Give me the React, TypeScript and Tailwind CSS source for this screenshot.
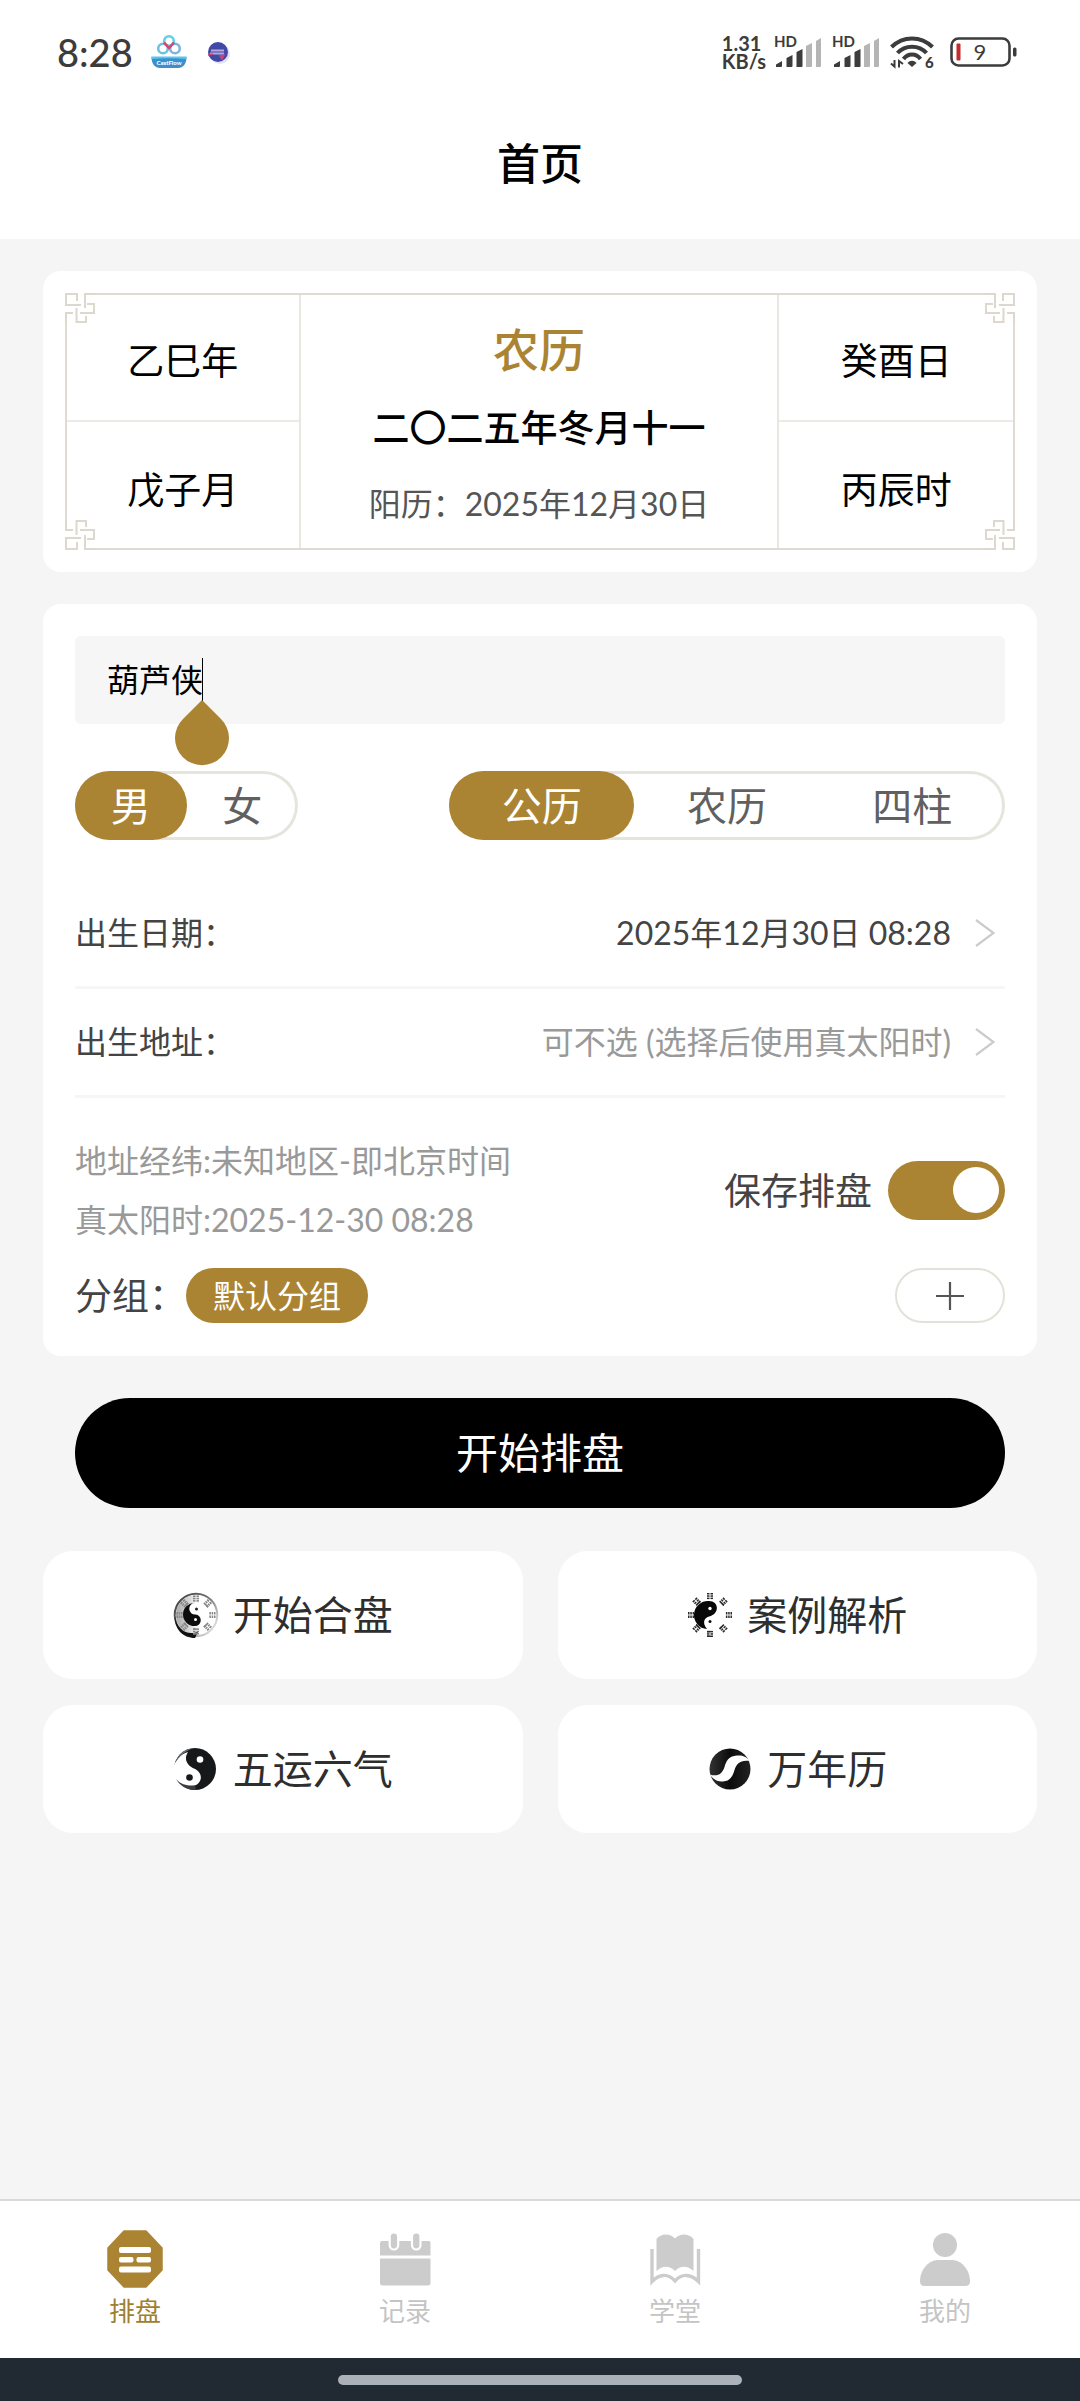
import React, { useState } from "react";

const TRIGRAM_ANGLES = [0, 45, 90, 135, 180, 225, 270, 315];

function CastIcon() {
  return (
    <svg width="36" height="36" viewBox="0 0 36 36" aria-label="CastFlow">
      <g fill="none" strokeWidth="2.6">
        <circle cx="12" cy="14.5" r="4.8" stroke="#6cc3e0" />
        <circle cx="24" cy="14.5" r="4.8" stroke="#7fb4dd" />
        <circle cx="18" cy="7" r="4.8" stroke="#5fd0e6" />
        <path d="M13 8.500 18 14l5-5.500" stroke="#d8436f" strokeLinejoin="round" />
      </g>
      <path d="M0.500 23H35.500C35.500 30 32 34 27 34H9C4 34 .5 30 .5 23Z" fill="#3d8ecb" />
      <path d="M.5 22.500H35.500V25C24 24 12 24 .5 25Z" fill="#56c8ee" />
      <text x="18" y="31" textAnchor="middle" fontSize="6" fontWeight="900" fill="#fff" fontFamily="Lato">
        CastFlow
      </text>
    </svg>
  );
}

function GlobeBadge() {
  return (
    <svg width="24" height="24" viewBox="0 0 24 24" aria-hidden="true">
      <circle cx="13" cy="14" r="10" fill="#e4e1f2" />
      <circle cx="11" cy="12" r="10" fill="#3f4aa8" />
      <path d="M4 10.500H17M3 13.500H17" stroke="#b9a7d8" strokeWidth="2" />
      <path d="M1 15l5-1M13 16l4-1-2 4Z" stroke="#c2457f" strokeWidth="1.500" fill="#c2457f" />
    </svg>
  );
}

function SignalIcon() {
  return (
    <svg width="48" height="42" viewBox="0 -4 48 42" aria-hidden="true">
      <text x="0" y="12" fontSize="15" fontWeight="700" fill="#3c3c3c" fontFamily="Lato">
        HD
      </text>
      <g fill="#3c3c3c">
        <path d="M2 32V29.500L8 26V31a1 1 0 0 1-1 1Z" />
        <path d="M12.500 32V23L18.500 20V31a1 1 0 0 1-1 1Z" />
        <path d="M22.500 32V17L28.500 14V31a1 1 0 0 1-1 1Z" />
      </g>
      <g fill="#b5b5b5">
        <path d="M32 32V11L38 8V31a1 1 0 0 1-1 1Z" />
        <path d="M42 32V6L47 3V31a1 1 0 0 1-1 1Z" />
      </g>
    </svg>
  );
}

function WifiIcon() {
  return (
    <svg width="48" height="42" viewBox="0 -4 48 42" aria-hidden="true">
      <g fill="none" stroke="#3c3c3c" strokeWidth="4">
        <path d="M1.500 12C13 .5 31 .5 42.500 12" />
        <path d="M7.500 18C15 9.500 29 9.500 36.500 18" />
        <path d="M13.500 24C18 18 26 18 30.500 24" />
      </g>
      <path d="M17.500 28C20 25 24 25 26.500 28L22 32Z" fill="#3c3c3c" />
      <path d="M1 28.500 4.500 31.500V25M9 32.500V26L13 29" fill="none" stroke="#3c3c3c" strokeWidth="2" />
      <text x="35" y="33" fontSize="15" fontWeight="900" fill="#3c3c3c" fontFamily="Lato">
        6
      </text>
    </svg>
  );
}

function BatteryIcon() {
  return (
    <svg width="68" height="30" viewBox="0 0 68 30" aria-label="电量 9">
      <rect x="1.500" y="1.500" width="58" height="27" rx="7" fill="none" stroke="#3c3c3c" strokeWidth="2.600" />
      <rect x="6.500" y="6.500" width="4" height="17" rx="1" fill="#c42b2b" />
      <rect x="63" y="10.500" width="3.500" height="9" rx="1.500" fill="#3c3c3c" />
      <text x="30" y="22.500" textAnchor="middle" fontSize="22" fill="#3c3c3c" fontFamily="Lato">
        9
      </text>
    </svg>
  );
}

function Corner({ className }: { className: string }) {
  return (
    <svg className={`absolute bg-white ${className}`} width="30" height="30" viewBox="0 0 30 30" aria-hidden="true">
      <g fill="none" stroke="#dcd8ce" strokeWidth="2">
        <path d="M12 8V1H1V12H16" />
        <path d="M30 1H20V15" />
        <path d="M22 11H29V20H15" />
        <path d="M11.500 15V29H21V23" />
        <path d="M8 20H1V30" />
      </g>
    </svg>
  );
}

function Trigrams({ radius, color }: { radius: number; color: string }) {
  return (
    <g fill={color}>
      {TRIGRAM_ANGLES.map((a, i) => (
        <g key={a} transform={`rotate(${a} 23 23) translate(23 ${23 - radius})`}>
          <rect x="-3" y="-3" width={i % 4 === 0 && i ? 6 : 2.5} height="1.500" />
          <rect x=".5" y="-3" width="2.500" height="1.500" />
          <rect x="-3" y="-.7" width="2.500" height="1.500" />
          <rect x=".5" y="-.7" width="2.500" height="1.500" />
          <rect x="-3" y="1.600" width={i % 2 || i === 4 ? 6 : 2.5} height="1.500" />
          <rect x=".5" y="1.600" width="2.500" height="1.500" />
        </g>
      ))}
    </g>
  );
}

function BaguaRingIcon() {
  return (
    <svg width="46" height="46" viewBox="0 0 46 46" aria-hidden="true">
      <defs>
        <linearGradient id="ring" x1="0" y1="0" x2="1" y2="0.800">
          <stop offset="0" stopColor="#3a3a3a" />
          <stop offset=".55" stopColor="#777" />
          <stop offset="1" stopColor="#e8e8e8" />
        </linearGradient>
        <linearGradient id="disc" x1="0" y1="0" x2="1" y2="0">
          <stop offset="0" stopColor="#a8a8a8" />
          <stop offset=".6" stopColor="#fff" />
        </linearGradient>
      </defs>
      <circle cx="23" cy="23" r="20" fill="url(#disc)" />
      <circle cx="23" cy="23" r="21.300" fill="none" stroke="url(#ring)" strokeWidth="2" />
      <path d="M2 24C3 36 12 42 20 41L25 40 22 46C10 46 1 37 2 24Z" fill="#111" />
      <Trigrams radius={16.5} color="#858585" />
      <circle cx="22.500" cy="22.500" r="12" fill="#fff" />
      <path d="M21.500 11A11.500 11.500 0 0 0 21.500 34A5.750 5.750 0 0 0 22.500 22.500A5.750 5.750 0 0 1 21.500 11Z" fill="#0d0d0d" />
      <circle cx="23.500" cy="17" r="1.500" fill="#222" />
      <circle cx="22.500" cy="27.500" r="1.500" fill="#fff" />
    </svg>
  );
}

function BaguaIcon() {
  return (
    <svg width="46" height="46" viewBox="0 0 46 46" aria-hidden="true">
      <Trigrams radius={19} color="#2b2b2b" />
      <path d="M22 9A13.500 13.500 0 0 0 20 37C15 31 17 26 22 24.500C33 22 32 9 22 9Z" fill="#080808" />
      <circle cx="23" cy="16.500" r="1.700" fill="#fff" />
      <circle cx="23" cy="29.500" r="1.500" fill="#111" />
    </svg>
  );
}

function TaijiIcon() {
  return (
    <svg width="46" height="46" viewBox="0 0 46 46" aria-hidden="true">
      <circle cx="22" cy="23" r="21" fill="#17181a" />
      <path d="M15 6C10 14 15 20 21 22.500C29 26 30 34 24 38.500C17 42 7 41 0 35C-3 22 4 9 15 6Z" fill="#fff" />
      <path d="M2 17C5 8 12 3 19 2.500C12 6 7 9 2 17Z" fill="#6b6e72" />
      <path d="M3 33C8 39 15 40 22 39.500L23 44C14 44 7 40 3 33Z" fill="#3a3c3f" />
      <circle cx="27" cy="13.500" r="3.300" fill="#fff" />
      <circle cx="16.500" cy="31.500" r="3.300" fill="#17181a" />
    </svg>
  );
}

function SwirlIcon() {
  return (
    <svg width="46" height="46" viewBox="0 0 46 46" aria-hidden="true">
      <defs>
        <linearGradient id="swirl" x1="0" y1="0" x2="1" y2="0">
          <stop offset="0" stopColor="#333" />
          <stop offset=".5" stopColor="#0b0b0b" />
          <stop offset="1" stopColor="#222" />
        </linearGradient>
      </defs>
      <circle cx="23" cy="23" r="20.500" fill="url(#swirl)" />
      <path
        d="M43 15C39 10 35 9 30 9.500C21 10 19 16 17.500 21C15 28 11 31 2.500 28.500C7 34 11 36 16 35.500C24 35 26 29 27.500 24C29.500 17 34 13.500 43 15Z"
        fill="#fff"
      />
    </svg>
  );
}

function PaipanIcon() {
  return (
    <svg width="56" height="58" viewBox="0 0 56 58" aria-hidden="true">
      <path d="M17 1H39L55 18V40L39 57H17L1 40V18Z" fill="#ab8433" stroke="#ab8433" strokeWidth="1.500" strokeLinejoin="round" />
      <g fill="#fff">
        <rect x="12" y="17" width="32" height="6" rx="2" />
        <rect x="12" y="27" width="14.500" height="5.500" rx="2" />
        <rect x="29.500" y="27" width="14.500" height="5.500" rx="2" />
        <rect x="12" y="36.500" width="32" height="6" rx="2" />
      </g>
    </svg>
  );
}

function CalendarIcon() {
  return (
    <svg width="56" height="58" viewBox="0 0 56 58" aria-hidden="true">
      <g fill="#ccc">
        <path d="M5 11H51A2 2 0 0 1 53.500 13V25.500H3V13A2 2 0 0 1 5 11Z" />
        <path d="M3 28.500H53.500V53A2.500 2.500 0 0 1 51 55.500H5.500A2.500 2.500 0 0 1 3 53Z" />
        <rect x="12.700" y="2.500" width="8.500" height="17" rx="4.200" stroke="#fff" strokeWidth="2.200" />
        <rect x="35" y="2.500" width="8.500" height="17" rx="4.200" stroke="#fff" strokeWidth="2.200" />
      </g>
    </svg>
  );
}

function BookIcon() {
  return (
    <svg width="56" height="58" viewBox="0 0 56 58" aria-hidden="true">
      <path d="M9.500 9C14 3 23 3 28 8.500C33 3 42 3 46.500 9V41C41 36 34 35 28 41C22 35 15 36 9.500 41Z" fill="#ccc" />
      <path d="M5 19V51.500C12 44 21 43 28 51C35 43 44 44 51.500 51.500V19" fill="none" stroke="#ccc" strokeWidth="3.400" />
    </svg>
  );
}

function PersonIcon() {
  return (
    <svg width="56" height="58" viewBox="0 0 56 58" aria-hidden="true">
      <g fill="#ccc">
        <circle cx="28" cy="15" r="12" />
        <path d="M20 30H36C46 31 53 41 53 51C53 55 51 56 48 56H8C5 56 3 55 3 51C3 41 10 31 20 30Z" />
      </g>
    </svg>
  );
}

function Chevron() {
  return (
    <svg width="20" height="28" viewBox="0 0 20 28" aria-hidden="true">
      <path d="M1 1 18.500 14 1 27" fill="none" stroke="#ccc" strokeWidth="2.200" />
    </svg>
  );
}

function Segmented({ name, legend, options, width }: { name: string; legend: string; options: string[]; width: string }) {
  const [value, setValue] = useState(options[0]);
  return (
    <fieldset className={`relative flex h-[69px] rounded-full ${width}`}>
      <legend className="sr-only">{legend}</legend>
      <div className="flex flex-1 rounded-full ring-[3px] ring-inset ring-[#e6e5dd]">
        {options.map((o) => (
          <label
            key={o}
            className="flex flex-1 items-center justify-center rounded-full text-[40px] text-[#606060] has-checked:bg-[#ab8433] has-checked:text-white"
          >
            <input
              type="radio"
              name={name}
              className="sr-only"
              checked={value === o}
              onChange={() => setValue(o)}
            />
            {o}
          </label>
        ))}
      </div>
    </fieldset>
  );
}

function PickerRow({ label, value, muted }: { label: string; value: string; muted?: boolean }) {
  return (
    <button type="button" className="flex h-[109px] w-full items-center border-b-3 border-[#f6f6f6] text-[32px]">
      <span className="text-[#444]">{label}</span>
      <span className={`ml-auto mr-6 ${muted ? "text-[#999]" : "text-[#444]"}`}>{value}</span>
      <span className="mr-2.5">
        <Chevron />
      </span>
    </button>
  );
}

const LINKS = [
  { text: "开始合盘", icon: <BaguaRingIcon /> },
  { text: "案例解析", icon: <BaguaIcon /> },
  { text: "五运六气", icon: <TaijiIcon /> },
  { text: "万年历", icon: <SwirlIcon /> },
];

const TABS = [
  { text: "排盘", icon: <PaipanIcon />, active: true },
  { text: "记录", icon: <CalendarIcon />, active: false },
  { text: "学堂", icon: <BookIcon />, active: false },
  { text: "我的", icon: <PersonIcon />, active: false },
];

export default function App() {
  return (
    <div className="flex min-h-screen flex-col bg-[#f5f5f5] font-[Lato,'Noto_Sans_CJK_SC',sans-serif] leading-none text-black">
      <header className="bg-white">
        <div className="flex h-[88px] items-center pl-[57px] pr-[62px] pt-4">
          <span className="text-[38px] font-medium text-[#3c3c3c]">8:28</span>
          <div className="ml-[18px] flex items-center gap-5">
            <CastIcon />
            <GlobeBadge />
          </div>
          <div className="ml-auto flex items-center">
            <div className="mr-2 text-[20px] leading-[18px] font-bold text-[#3c3c3c]">
              <div>1.31</div>
              <div>KB/s</div>
            </div>
            <div className="flex gap-2.5">
              <SignalIcon />
              <SignalIcon />
              <WifiIcon />
            </div>
            <div className="ml-3">
              <BatteryIcon />
            </div>
          </div>
        </div>
        <h1 className="flex h-[151px] items-center justify-center text-[43px] font-medium">首页</h1>
      </header>

      <main className="flex-1 px-[43px] pt-8">
        <section className="rounded-[18px] bg-white p-[22px]">
          <div className="relative grid h-[257px] grid-cols-[235fr_480fr_237fr] border-2 border-[#dfdbd2] text-[37px]">
            <div className="grid grid-rows-2 border-r-2 border-[#e9e7e1]">
              <div className="flex items-center justify-center border-b-2 border-[#eceae5] pt-1.5">乙巳年</div>
              <div className="flex items-center justify-center pt-2.5">戊子月</div>
            </div>
            <div className="flex flex-col items-center pt-8">
              <h2 className="text-[46px] font-medium text-[#ab8433]">农历</h2>
              <p className="mt-9 font-medium">二〇二五年冬月十一</p>
              <p className="mt-[42px] text-[32px] text-[#555]">阳历：2025年12月30日</p>
            </div>
            <div className="grid grid-rows-2 border-l-2 border-[#e9e7e1]">
              <div className="flex items-center justify-center border-b-2 border-[#eceae5] pt-1.5">癸酉日</div>
              <div className="flex items-center justify-center pt-2.5">丙辰时</div>
            </div>
            <Corner className="-top-0.5 -left-0.5" />
            <Corner className="-top-0.5 -right-0.5 -scale-x-100" />
            <Corner className="-bottom-0.5 -left-0.5 -scale-y-100" />
            <Corner className="-right-0.5 -bottom-0.5 -scale-100" />
          </div>
        </section>

        <section className="mt-8 rounded-[18px] bg-white px-8 pt-8 pb-[33px]">
          <div className="relative">
            <input
              type="text"
              aria-label="姓名"
              defaultValue="葫芦侠"
              className="block h-[88px] w-full rounded-md bg-[#f6f6f6] px-8 pb-1 text-[32px] outline-none"
            />
            <span className="absolute top-[22px] left-[127px] h-[43px] w-px bg-black" />
            <svg className="absolute top-16 left-[100px]" width="54" height="66" viewBox="0 0 54 66" aria-hidden="true">
              <path d="M27 0 46 19A27 27 0 1 1 8 19Z" fill="#ab8433" />
            </svg>
          </div>

          <div className="mt-[47px] flex justify-between">
            <Segmented name="gender" legend="性别" options={["男", "女"]} width="w-[223px]" />
            <Segmented name="calendar" legend="历法" options={["公历", "农历", "四柱"]} width="w-[556px]" />
          </div>

          <div className="mt-10">
            <PickerRow label="出生日期：" value="2025年12月30日 08:28" />
            <PickerRow label="出生地址：" value="可不选 (选择后使用真太阳时)" muted />
          </div>

          <div className="mt-[33px] flex items-center justify-between">
            <div className="text-[32px] leading-[59px] text-[#999]">
              <p>地址经纬:未知地区-即北京时间</p>
              <p>真太阳时:2025-12-30 08:28</p>
            </div>
            <label className="flex items-center gap-4 text-[37px] text-[#444]">
              保存排盘
              <input type="checkbox" role="switch" defaultChecked className="peer sr-only" />
              <span className="flex h-[59px] w-[117px] items-center rounded-full bg-[#ccc] px-1.5 peer-checked:justify-end peer-checked:bg-[#ab8433]">
                <span className="size-[46px] rounded-full bg-white" />
              </span>
            </label>
          </div>

          <div className="mt-[19px] flex items-center text-[37px] text-[#444]">
            <span>分组：</span>
            <button type="button" className="h-[55px] rounded-full bg-[#ab8433] px-[27px] text-[32px] text-white">
              默认分组
            </button>
            <button
              type="button"
              aria-label="添加分组"
              className="ml-auto flex h-[55px] w-[110px] items-center justify-center rounded-full border-2 border-[#e3e2da]"
            >
              <svg width="30" height="30" viewBox="0 0 30 30" aria-hidden="true">
                <path d="M15 1V29M1 15H29" stroke="#555" strokeWidth="2.200" />
              </svg>
            </button>
          </div>
        </section>

        <div className="mt-[42px] px-8">
          <button type="button" className="h-[110px] w-full rounded-full bg-black text-[42px] text-white">
            开始排盘
          </button>
        </div>

        <div className="mt-[43px] grid grid-cols-2 gap-x-[35px] gap-y-[26px]">
          {LINKS.map((l) => (
            <a
              key={l.text}
              href="#"
              className="flex h-[128px] items-center justify-center gap-3.5 rounded-[30px] bg-white text-[40px] text-[#2e2e2e]"
            >
              {l.icon}
              {l.text}
            </a>
          ))}
        </div>
      </main>

      <nav className="grid h-[159px] grid-cols-4 border-t-2 border-[#d9d9d9] bg-white">
        {TABS.map((t) => (
          <a
            key={t.text}
            href="#"
            aria-current={t.active ? "page" : undefined}
            className={`flex flex-col items-center gap-2.5 pt-[29px] text-[26px] ${t.active ? "text-[#a08030]" : "text-[#c4c4c4]"}`}
          >
            {t.icon}
            {t.text}
          </a>
        ))}
      </nav>
      <footer className="flex h-[43px] items-center justify-center bg-[#212a32]">
        <div className="h-2.5 w-[404px] rounded-full bg-[#abb1b8]" />
      </footer>
    </div>
  );
}
